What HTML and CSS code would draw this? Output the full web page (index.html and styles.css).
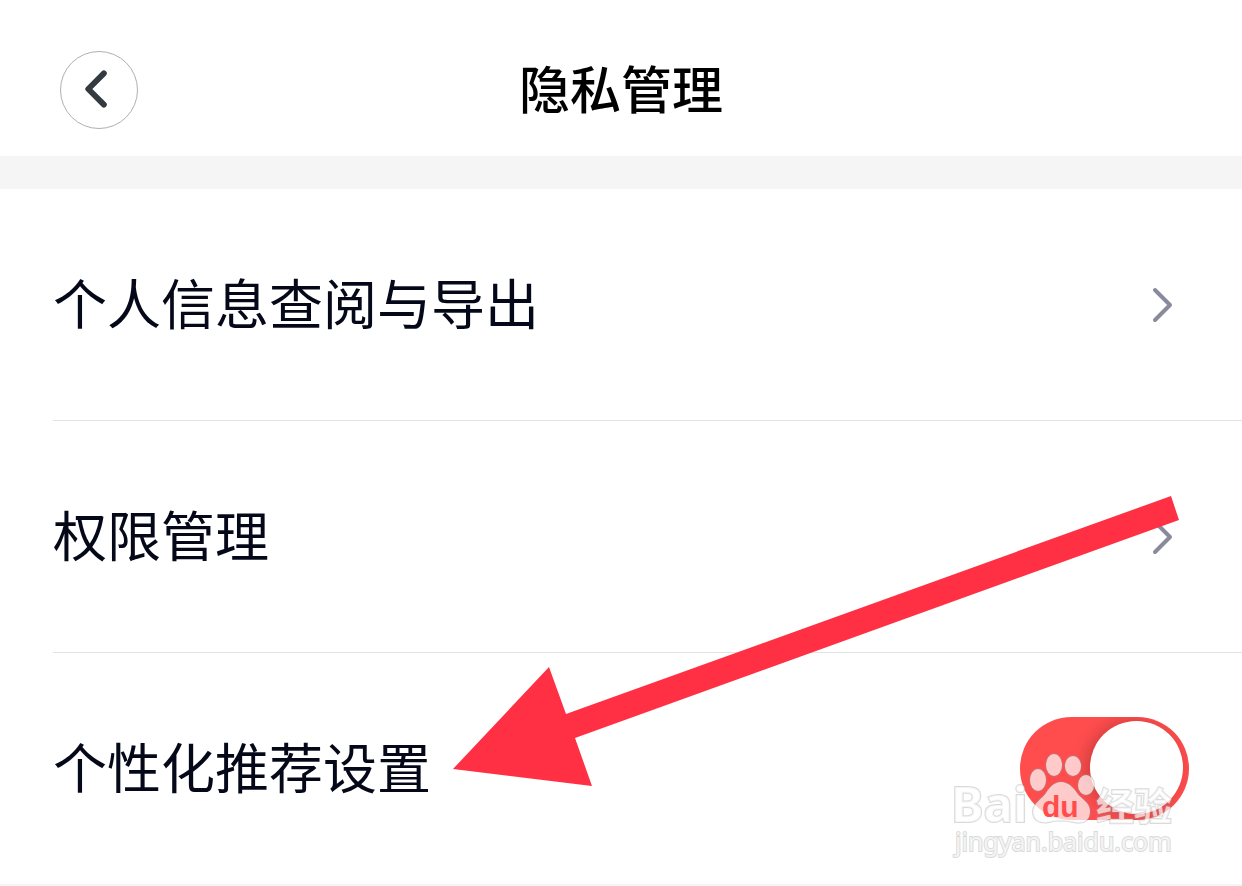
FILE: index.html
```html
<!DOCTYPE html>
<html lang="zh-CN">
<head>
    <meta charset="UTF-8">
    <meta name="viewport" content="width=device-width, initial-scale=1.0">
    <title>隐私管理</title>
    <link rel="stylesheet" href="styles.css">
</head>
<body>
<header class="topbar">
    <button type="button" class="back" aria-label="返回">
        <svg viewBox="0 0 78 78" fill="none" stroke="currentColor" stroke-width="6" stroke-linecap="round" stroke-linejoin="round">
            <path d="M44 22 28 38 44 54"></path>
        </svg>
    </button>
    <h1>隐私管理</h1>
</header>

<main class="settings">
    <a href="#export" class="row">
        <span class="row-title">个人信息查阅与导出</span>
        <svg class="chevron" viewBox="0 0 22 36" fill="none" stroke="currentColor" stroke-width="4" stroke-linecap="round" stroke-linejoin="round">
            <path d="M4 3 19 18 4 33"></path>
        </svg>
    </a>
    <a href="#permissions" class="row">
        <span class="row-title">权限管理</span>
        <svg class="chevron" viewBox="0 0 22 36" fill="none" stroke="currentColor" stroke-width="4" stroke-linecap="round" stroke-linejoin="round">
            <path d="M4 3 19 18 4 33"></path>
        </svg>
    </a>
    <div class="row">
        <label class="row-title" for="personalized">个性化推荐设置</label>
        <input type="checkbox" role="switch" id="personalized" class="switch" checked>
    </div>

    <!-- Pointer to the recommendation setting -->
    <svg class="arrow" viewBox="453 496 727 290" aria-hidden="true">
        <path d="M453 769 549 667 566 714 1171 496 1179 520 575 738 592 786Z"></path>
    </svg>

    <svg class="watermark" viewBox="0 0 240 120">
        <text class="mark-latin" x="3" y="79">Bai</text>
        <g class="paw">
            <ellipse cx="90" cy="37" rx="8" ry="11"></ellipse>
            <ellipse cx="106" cy="22" rx="8" ry="11"></ellipse>
            <ellipse cx="125" cy="23" rx="8" ry="10"></ellipse>
            <ellipse cx="138" cy="42" rx="8" ry="10"></ellipse>
            <path d="M113 39C120 39 125 44 129 50 133 56 142 59 142 68 142 79 134 81 125 79 117 77 109 77 101 79 92 81 85 77 85 69 85 60 94 56 98 50 102 44 106 39 113 39Z"></path>
        </g>
        <text class="mark-du" x="94" y="74">du</text>
        <text class="mark-cjk" x="148" y="77">经验</text>
        <text class="mark-url" x="7" y="108">jingyan.baidu.com</text>
    </svg>
</main>
</body>
</html>
```
FILE: styles.css
```css
:root {
    --color-text: #050818;
    --color-icon: #898b9d;
    --color-line: #e3e3e4;
    --color-band: #f5f5f5;
    --color-switch: #ff4d4d;
    --color-arrow: #ff3044;
    --font-sans: 'Noto Sans CJK SC', sans-serif;
}

* {
    box-sizing: border-box;
    margin: 0;
    padding: 0;
}

body {
    font-family: var(--font-sans);
    color: var(--color-text);
    background-color: #fff;
}

.topbar {
    display: grid;
    grid-template-columns: 78px 1fr 78px;
    align-items: center;
    padding: 48px 60px 24px;
    border-bottom: 33px solid var(--color-band);
}

.back {
    width: 78px;
    height: 78px;
    border: 1px solid #b0b0b0;
    border-radius: 50%;
    background: none;
    color: #343a42;
}

.back svg {
    display: block;
}

h1 {
    padding-bottom: 6px;
    font-size: 51px;
    font-weight: 500;
    line-height: 78px;
    text-align: center;
    color: #000;
}

.settings {
    position: relative;
    padding-left: 53px;
    border-bottom: 2px solid var(--color-band);
}

.row {
    display: flex;
    align-items: center;
    justify-content: space-between;
    min-height: 231px;
    padding-right: 53px;
    font-size: 54px;
    line-height: 80px;
    color: inherit;
    text-decoration: none;
}

a.row {
    min-height: 232px;
    border-bottom: 1px solid var(--color-line);
}

.row-title {
    padding-bottom: 6px;
}

.chevron {
    width: 22px;
    height: 36px;
    margin-right: 16px;
    color: var(--color-icon);
}

.switch {
    appearance: none;
    width: 169px;
    height: 103px;
    padding: 4px 6px;
    border-radius: 52px;
    background-color: var(--color-switch);
    overflow: hidden;
}

.switch::before {
    content: "";
    display: block;
    width: 93px;
    height: 93px;
    border-radius: 50%;
    background-color: #fff;
    box-shadow: -4px 0 16px rgba(0, 0, 0, 0.2);
}

.switch:checked::before {
    margin-left: auto;
}

.arrow {
    position: absolute;
    top: 307px;
    right: 62px;
    width: 727px;
    height: 290px;
    fill: var(--color-arrow);
    pointer-events: none;
}

.watermark {
    position: absolute;
    right: 54px;
    bottom: 21px;
    width: 240px;
    height: 120px;
    fill: rgba(255, 255, 255, 0.7);
    stroke: rgba(150, 150, 150, 0.35);
    stroke-width: 2px;
    paint-order: stroke;
    pointer-events: none;
}

.mark-latin {
    font: bold 49px 'Noto Sans', sans-serif;
}

.mark-du {
    font: bold 30px 'Liberation Sans', sans-serif;
    fill: var(--color-switch);
    stroke: none;
}

.mark-cjk {
    font-size: 38px;
    font-weight: 700;
}

.mark-url {
    font: 25px 'Noto Sans', sans-serif;
}
```
